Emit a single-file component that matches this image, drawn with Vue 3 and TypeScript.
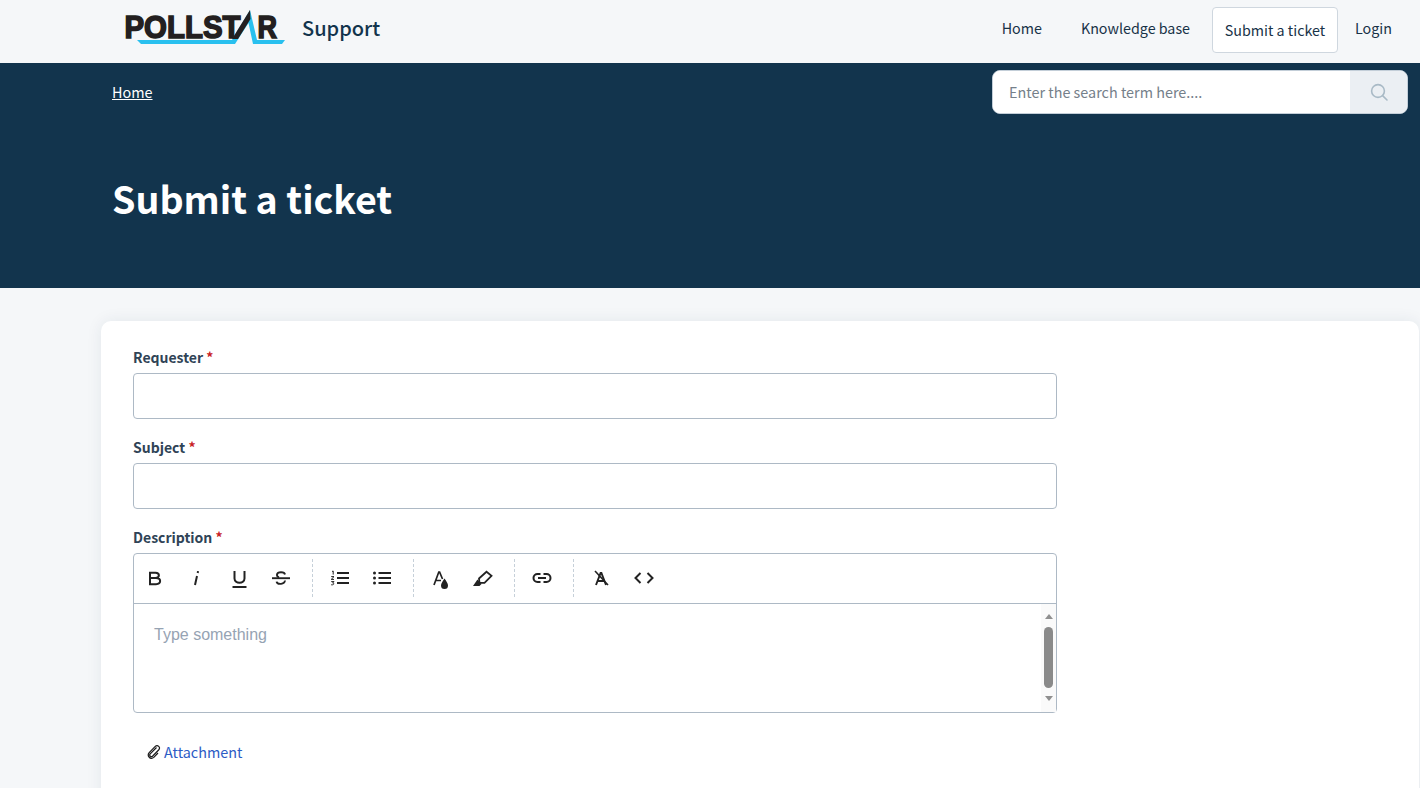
<script setup lang="ts">
const navLinks: string[] = ['Home', 'Knowledge base']
</script>

<template>
  <div class="page">
    <header class="topbar">
      <div class="brand">
        <svg class="logo" width="164" height="36" viewBox="0 0 164 36">
          <text class="logo-text" x="2.5" y="28" textLength="116" lengthAdjust="spacingAndGlyphs">POLLST</text>
          <text class="logo-text" x="135.5" y="28" textLength="19.5" lengthAdjust="spacingAndGlyphs">R</text>
          <path d="M15 30 H110 L128 0 L135 30 H163 L160 34 H131 L126.5 13 L113 34 H19 Z" fill="#29c0ef" />
          <path d="M110 29 L128 0 L128.5 9 L116 29 Z" fill="#231f20" />
        </svg>
        <span class="brand-name">Support</span>
      </div>
      <nav class="nav">
        <a v-for="l in navLinks" :key="l" class="nav-link">{{ l }}</a>
        <a class="nav-link active">Submit a ticket</a>
        <a class="nav-link login">Login</a>
      </nav>
    </header>

    <section class="hero">
      <div class="hero-top">
        <a class="crumb">Home</a>
        <div class="search">
          <input class="search-input" placeholder="Enter the search term here...." />
          <button class="search-btn" aria-label="Search">
            <svg width="20" height="20" viewBox="0 0 20 20" fill="none" stroke="#a9bac6" stroke-width="1.6">
              <circle cx="9" cy="9" r="6.4" />
              <path d="M13.6 13.6 L18 18" stroke-linecap="round" />
            </svg>
          </button>
        </div>
      </div>
      <h1 class="title">Submit a ticket</h1>
    </section>

    <main class="card">
      <div class="field">
        <label class="label">Requester <span class="req">*</span></label>
        <input class="input" />
      </div>
      <div class="field">
        <label class="label">Subject <span class="req">*</span></label>
        <input class="input" />
      </div>
      <div class="field">
        <label class="label">Description <span class="req">*</span></label>
        <div class="editor">
          <div class="toolbar">
            <div class="group">
              <button class="tool"><svg width="24" height="24" viewBox="0 0 24 24" fill="none" stroke="#222" stroke-width="2"><path d="M8 6.7 H13.5 C18 6.7 18 12 13.5 12 H8 M8 12 H14 C19.5 12 19.5 18.2 14 18.2 H8 M8 5.7 V19.2" /></svg></button>
              <button class="tool"><svg width="24" height="24" viewBox="0 0 24 24" fill="none" stroke="#222" stroke-width="2"><path d="M11 19 L13 10 M14 5.2 L13.7 7" /></svg></button>
              <button class="tool"><svg width="24" height="24" viewBox="0 0 24 24" fill="none" stroke="#222" stroke-width="2"><path d="M7.5 5 V12.5 C7.5 18 17.5 18 17.5 12.5 V5" /><path d="M5.5 21 H19.5" /></svg></button>
              <button class="tool"><svg width="24" height="24" viewBox="0 0 24 24" fill="none" stroke="#222" stroke-width="1.9"><path d="M16 8.5 C15.5 5.5 8.5 5.5 8 8.5 C7.8 9.8 8.5 10.8 10 11.3 M15.8 14.5 C16.5 18.5 8 19 7.6 15.6" /><path d="M3 12.2 H21" /></svg></button>
            </div>
            <span class="sep"></span>
            <div class="group">
              <button class="tool"><svg width="24" height="24" viewBox="0 0 24 24" fill="none" stroke="#222"><path d="M9 7 H21 M9 12 H21 M9 17 H21" stroke-width="2" /><path d="M4 5.5 L5.2 5 V8.6 M3.2 10.6 H6 L3.2 13.4 H6 M3.2 15.6 H6 L4.6 17 C6.4 17 6.4 19.2 3.2 18.8" stroke-width="1" /></svg></button>
              <button class="tool"><svg width="24" height="24" viewBox="0 0 24 24" fill="none" stroke="#222"><path d="M8.5 7 H21 M8.5 12 H21 M8.5 17 H21" stroke-width="2" /><circle cx="4.5" cy="7" r="1.5" fill="#222" stroke="none" /><circle cx="4.5" cy="12" r="1.5" fill="#222" stroke="none" /><circle cx="4.5" cy="17" r="1.5" fill="#222" stroke="none" /></svg></button>
            </div>
            <span class="sep"></span>
            <div class="group">
              <button class="tool"><svg width="24" height="24" viewBox="0 0 24 24" fill="none" stroke="#222" stroke-width="1.7"><path d="M5 19 L9.8 6 H10.6 L13.5 13 M7 14.5 H12" /><path d="M15.5 12.5 C13.5 15.5 12 17.5 12 19.5 A3.5 3.5 0 0 0 19 19.5 C19 17.5 17.5 15.5 15.5 12.5 Z" fill="#222" stroke="none" /></svg></button>
              <button class="tool"><svg width="24" height="24" viewBox="0 0 24 24" fill="none" stroke="#222" stroke-width="1.8"><path d="M8 12.5 L15.5 5.8 L20.5 9.8 L13.5 16.8 L8.5 16.8 Z" /><path d="M6.5 13.5 L10.5 18 L8.5 20 L2 20 Z" fill="#222" stroke="none" /></svg></button>
            </div>
            <span class="sep"></span>
            <div class="group">
              <button class="tool"><svg width="24" height="24" viewBox="0 0 24 24" fill="none" stroke="#222" stroke-width="2"><path d="M10.5 8 H7.5 A4 4 0 0 0 7.5 16 H10.5 M13.5 8 H16.5 A4 4 0 0 1 16.5 16 H13.5 M8 12 H16" /></svg></button>
            </div>
            <span class="sep"></span>
            <div class="group">
              <button class="tool"><svg width="24" height="24" viewBox="0 0 24 24" fill="none" stroke="#222" stroke-width="1.9"><path d="M7 19 L11.6 7 H12.4 L17 19 M9 15 H15" /><path d="M6 5 L19 19" stroke-width="1.6" /></svg></button>
              <button class="tool"><svg width="24" height="24" viewBox="0 0 24 24" fill="none" stroke="#222" stroke-width="2"><path d="M8.5 7 L3.5 12 L8.5 17 M15.5 7 L20.5 12 L15.5 17" /></svg></button>
            </div>
          </div>
          <div class="editor-body">
            <div class="editor-text">Type something</div>
            <div class="scrollbar">
              <span class="arrow up"></span>
              <span class="thumb"></span>
              <span class="arrow down"></span>
            </div>
          </div>
        </div>
      </div>
      <div class="attach">
        <svg width="14" height="16" viewBox="0 0 14 16" fill="none" stroke="#1b1b1b" stroke-width="1.2">
          <path d="M9.5 3.5 L3.2 9.8 C1.8 11.4 3.8 13.6 5.5 12.2 L11.6 6 C14 3.2 10.6 0.2 8 2.6 L2.2 8.6 C-0.4 11.6 3.4 16.4 6.8 13.4 L11 9" />
        </svg>
        <a class="attach-link">Attachment</a>
      </div>
    </main>
  </div>
</template>

<style scoped>
.page {
  height: 788px;
  overflow: hidden;
  background: #f5f7f9;
  font-family: "Noto Sans CJK SC", "Noto Sans", sans-serif;
  color: #183247;
}
.topbar {
  height: 63px;
  box-sizing: border-box;
  display: flex;
  justify-content: space-between;
  align-items: flex-start;
  padding-left: 122px;
  padding-right: 28px;
}
.brand {
  display: flex;
  align-items: flex-start;
  height: 58px;
}
.logo {
  margin-top: 10px;
}
.logo-text {
  font-family: "Liberation Sans", sans-serif;
  font-weight: 700;
  font-size: 32px;
  fill: #231f20;
  stroke: #231f20;
  stroke-width: 1.6px;
}
.brand-name {
  margin-left: 16px;
  font-size: 20px;
  line-height: 56px;
  font-weight: 500;
  color: #12344d;
}
.nav {
  display: flex;
  align-items: flex-start;
  font-size: 14.3px;
}
.nav-link {
  display: block;
  margin-top: 7px;
  height: 46px;
  line-height: 42px;
  padding: 0 19.5px;
  color: #183247;
  white-space: nowrap;
}
.nav-link.active {
  box-sizing: border-box;
  margin-left: 2.5px;
  padding: 1px 0 0;
  width: 126px;
  background: #fff;
  border: 1px solid #cfd7df;
  border-radius: 4px;
  text-align: center;
}
.nav-link.login {
  padding: 0 0 0 17px;
}
.hero {
  height: 225px;
  background: #12344d;
  box-sizing: border-box;
  padding: 7px 12px 0 112px;
  color: #fff;
}
.hero-top {
  display: flex;
  justify-content: space-between;
  align-items: flex-start;
}
.crumb {
  margin-top: 12px;
  font-size: 14.4px;
  line-height: 20px;
  font-weight: 400;
  color: #fff;
  text-decoration: underline;
}
.search {
  width: 416px;
  height: 44px;
  box-sizing: border-box;
  display: flex;
  border: 1px solid #c3ced8;
  border-radius: 8px;
  overflow: hidden;
  background: #fff;
}
.search-input {
  flex: 1;
  min-width: 0;
  border: 0;
  outline: 0;
  padding: 0 16px 2px;
  font: inherit;
  font-size: 14.4px;
  background: #fff;
}
.search-input::placeholder {
  color: #75808a;
  opacity: 1;
}
.search-btn {
  width: 57px;
  border: 0;
  padding: 0;
  background: #ebeff3;
  display: flex;
  align-items: center;
  justify-content: center;
}
.title {
  margin: 59px 0 0;
  font-size: 37.6px;
  line-height: 50px;
  font-weight: 700;
  color: #fff;
}
.card {
  margin: 33px 0 0 101px;
  width: 1318px;
  height: 600px;
  box-sizing: border-box;
  padding: 25px 32px;
  background: #fff;
  border-radius: 10px;
  box-shadow: 0 0 16px rgba(24, 50, 71, 0.08);
}
.field {
  margin-bottom: 17px;
}
.label {
  display: block;
  font-size: 14px;
  line-height: 22px;
  height: 27px;
  font-weight: 600;
  color: #2f4356;
}
.req {
  color: #c82124;
}
.input {
  display: block;
  width: 924px;
  height: 46px;
  box-sizing: border-box;
  border: 1px solid #adb9c5;
  border-radius: 4px;
  background: #fff;
  outline: 0;
}
.editor {
  width: 924px;
  height: 160px;
  box-sizing: border-box;
  border: 1px solid #adb9c5;
  border-radius: 4px;
  display: flex;
  flex-direction: column;
  margin-bottom: 28px;
}
.toolbar {
  height: 48px;
  padding-bottom: 1px;
  flex: none;
  display: flex;
  align-items: center;
  border-bottom: 1px solid #adb9c5;
  box-sizing: content-box;
}
.group {
  display: flex;
  gap: 2.3px;
}
.tool {
  width: 40px;
  height: 38px;
  border: 0;
  padding: 0;
  background: transparent;
  display: flex;
  align-items: center;
  justify-content: center;
}
.sep {
  width: 0;
  height: 38px;
  border-left: 1px dashed #c6d0d9;
  margin: 0 7px 0 11px;
}
.editor-body {
  flex: 1;
  min-height: 0;
  display: flex;
}
.editor-text {
  flex: 1;
  padding: 20px 20px 0;
  font-family: "Liberation Sans", Arial, sans-serif;
  font-size: 16px;
  line-height: 21px;
  color: #96a3b3;
}
.scrollbar {
  width: 15px;
  flex: none;
  background: #fafafa;
  display: flex;
  flex-direction: column;
  align-items: center;
  padding-top: 10px;
  box-sizing: border-box;
}
.arrow {
  width: 0;
  height: 0;
  border-left: 4.5px solid transparent;
  border-right: 4.5px solid transparent;
}
.arrow.up {
  border-bottom: 5px solid #8f8f8f;
}
.arrow.down {
  border-top: 5px solid #8f8f8f;
}
.thumb {
  width: 9px;
  height: 61px;
  margin: 8px 0;
  border-radius: 5px;
  background: #8a8a8a;
}
.attach {
  display: flex;
  align-items: center;
  padding-left: 14px;
  gap: 3px;
  font-size: 14.4px;
}
.attach-link {
  color: #2c5cc5;
}
</style>
